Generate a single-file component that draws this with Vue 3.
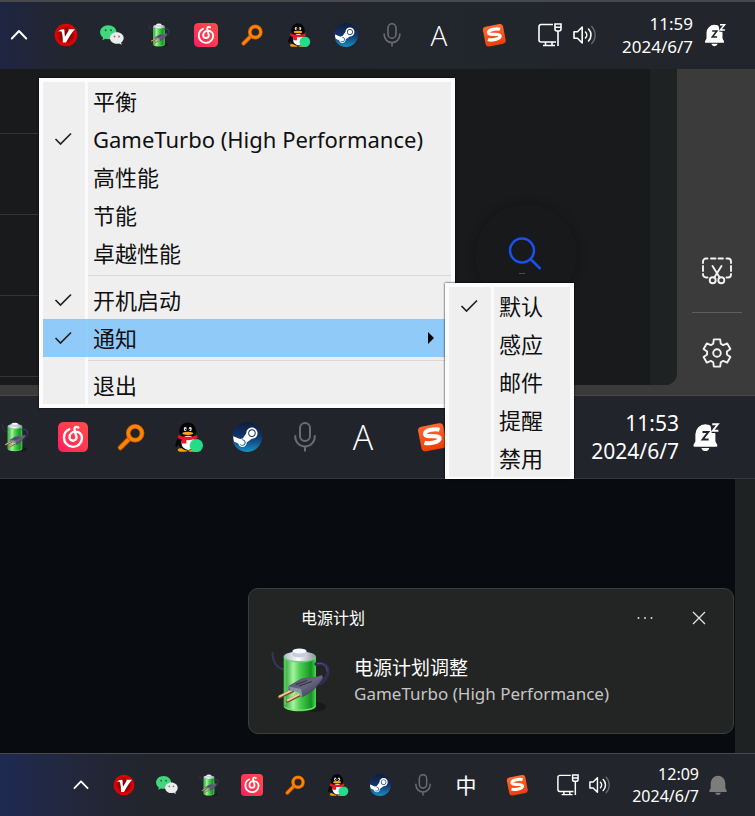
<script setup>
import { ref } from 'vue'

const trayApps = [
  { id: 'hidden', label: '显示隐藏的图标', icon: 'chevron' },
  { id: 'v', label: 'V', icon: 'vred' },
  { id: 'wechat', label: '微信', icon: 'wechat' },
  { id: 'power', label: '电源计划', icon: 'battery' },
  { id: 'music', label: '网易云音乐', icon: 'music' },
  { id: 'search', label: '搜索', icon: 'finder' },
  { id: 'qq', label: 'QQ', icon: 'qq' },
  { id: 'steam', label: 'Steam', icon: 'steam' },
  { id: 'mic', label: '麦克风', icon: 'mic' },
]

const bars = {
  top: { apps: trayApps, ime: 'A', time: '11:59', date: '2024/6/7', bell: 'bellzz', status: true },
  middle: { apps: trayApps.slice(3), ime: 'A', time: '11:53', date: '2024/6/7', bell: 'bellzz', status: false },
  bottom: { apps: trayApps, ime: '中', time: '12:09', date: '2024/6/7', bell: 'bell', status: true },
}

const menuGroups = [
  [
    { text: '平衡' },
    { text: 'GameTurbo (High Performance)', checked: true },
    { text: '高性能' },
    { text: '节能' },
    { text: '卓越性能' },
  ],
  [
    { text: '开机启动', checked: true },
    { text: '通知', checked: true, submenu: true },
  ],
  [{ text: '退出' }],
]

const sounds = ['默认', '感应', '邮件', '提醒', '禁用']
const sound = ref('默认')

function gearPath(c, outer, inner) {
  const points = []
  for (let k = 0; k < 6; k++) {
    const base = k * 60 - 90
    for (const [r, d] of [[inner, -22], [outer, -13], [outer, 13], [inner, 22]]) {
      const a = ((base + d) * Math.PI) / 180
      points.push(`${(c + r * Math.cos(a)).toFixed(2)} ${(c + r * Math.sin(a)).toFixed(2)}`)
    }
  }
  return `M${points.join('L')}Z`
}
const gear = gearPath(15, 14, 10)
</script>

<template>
  <svg class="sprite" aria-hidden="true">
    <defs>
      <radialGradient id="g-red"><stop offset="0" stop-color="#5d0000" /><stop offset=".6" stop-color="#a80000" /><stop offset=".85" stop-color="#e60000" /><stop offset="1" stop-color="#d80808" /></radialGradient>
      <linearGradient id="g-green" x1="0" x2="1" y1="0" y2="0"><stop offset="0" stop-color="#1f9a2b" /><stop offset=".3" stop-color="#a5f3a0" /><stop offset=".5" stop-color="#4fcf52" /><stop offset=".85" stop-color="#129420" /><stop offset="1" stop-color="#4fd456" /></linearGradient>
      <linearGradient id="g-cap" x1="0" x2="1" y1="0" y2="0"><stop offset="0" stop-color="#b8bccb" /><stop offset=".45" stop-color="#ffffff" /><stop offset="1" stop-color="#9396a8" /></linearGradient>
      <linearGradient id="g-plug" x1="0" x2="1" y1="0" y2="1"><stop offset="0" stop-color="#4c4d63" /><stop offset=".5" stop-color="#66677d" /><stop offset="1" stop-color="#25243a" /></linearGradient>
      <linearGradient id="g-music" x1="0" x2="1" y1="1" y2="0"><stop offset="0" stop-color="#ff1b63" /><stop offset=".5" stop-color="#ff3a50" /><stop offset="1" stop-color="#ff4a4c" /></linearGradient>
      <linearGradient id="g-steam" x1="0" x2="0" y1="0" y2="1"><stop offset="0" stop-color="#101c3c" /><stop offset=".5" stop-color="#12356b" /><stop offset="1" stop-color="#1691c8" /></linearGradient>
      <linearGradient id="g-sogou" x1="0" x2="0" y1="0" y2="1"><stop offset="0" stop-color="#ff6a30" /><stop offset="1" stop-color="#ee3e08" /></linearGradient>
    </defs>

    <symbol id="chevron" viewBox="0 0 24 24"><path d="M4.800 15.500 12 8l7.200 7.500" fill="none" stroke="#fff" stroke-width="2" stroke-linecap="round" stroke-linejoin="round" /></symbol>

    <symbol id="vred" viewBox="0 0 24 24">
      <circle cx="12" cy="12" r="11.300" fill="url(#g-red)" />
      <path d="M4 8.500Q6.500 5.800 10.300 6.200L10.900 13.800 15 7 14 6.300H20.800Q17 10.500 12 19.500H8.800Q8.900 12.500 7.400 8.600 6 7.800 4 8.500Z" fill="#fff" />
    </symbol>

    <symbol id="wechat" viewBox="0 0 24 24">
      <path d="M8.300 2.300C3.700 2.300.1 5.400.1 9.300c0 2.200 1.200 4.100 3 5.400l-.8 2.600 3.200-1.500c.9.300 1.800.4 2.800.4 4.600 0 8.200-3.100 8.200-6.900s-3.600-7-8.200-7z" fill="#42d77d" />
      <circle cx="5.600" cy="7.300" r="1" fill="#176b3a" /><circle cx="11" cy="7.300" r="1" fill="#176b3a" />
      <path d="M16.800 9.300c-3.800 0-6.900 2.600-6.900 5.700s3.100 5.800 6.900 5.800c.8 0 1.600-.1 2.300-.3l2.600 1.300-.6-2.200c1.600-1.100 2.600-2.700 2.600-4.600 0-3.100-3.100-5.700-6.900-5.700z" fill="#ececec" />
      <circle cx="14.500" cy="13.500" r=".9" fill="#77797c" /><circle cx="19" cy="13.500" r=".9" fill="#77797c" />
    </symbol>

    <symbol id="battery" viewBox="7 12 66 66">
      <ellipse cx="55" cy="72" rx="11" ry="5" fill="#000" opacity=".3" />
      <path d="M12.500 18C13 27 16 33 24 34.500" fill="none" stroke="#37355d" stroke-width="2.200" stroke-linecap="round" />
      <path d="M23.500 22v49c0 7 32.500 7 32.500 0V22z" fill="url(#g-green)" />
      <path d="M24.500 71c1 5.500 29.500 5.500 30.500 0" fill="none" stroke="#73ea6e" stroke-width="1.200" />
      <path d="M25 24v46" stroke="#7de47b" stroke-width="1" />
      <ellipse cx="39.700" cy="22" rx="16.200" ry="5.600" fill="#77c98a" />
      <ellipse cx="39.700" cy="21.300" rx="15" ry="4.800" fill="url(#g-cap)" />
      <path d="M32.500 16v4c0 3 14 3 14 0v-4z" fill="#c9ccda" />
      <ellipse cx="39.500" cy="16" rx="7" ry="2.500" fill="#f6f8ff" />
      <path d="M56 29c8-2 12.500 2 12 8-.5 6-4 9-8 12" fill="none" stroke="#302e55" stroke-width="3.400" stroke-linecap="round" />
      <path d="M57 28.500c7-1 10.500 3 10 8" fill="none" stroke="#55527e" stroke-width="1" />
      <path d="m19.500 62 13-6" stroke="#7b4a28" stroke-width="3.400" stroke-linecap="round" />
      <path d="m19.500 61.300 12.500-6" stroke="#edc79a" stroke-width="2" stroke-linecap="round" />
      <path d="m27.500 66 13-6.500" stroke="#7b4a28" stroke-width="3.400" stroke-linecap="round" />
      <path d="m27.500 65.300 12.500-6.500" stroke="#f3d0a5" stroke-width="2" stroke-linecap="round" />
      <path d="m28.500 51 12-7c5-2 12-1.500 17.500-2.500l4-1.500 1 3-4 5.500c-3 4-5 7-9 9.500l-8 4.500-2-5.500-11.500-2z" fill="url(#g-plug)" />
      <path d="m29 51.500 12 2.500 1.500 8-3-1.500v-3.500l-9-1.500z" fill="#8f8fab" />
      <path d="m36 49.500 11-4m-8 5.500 13-4.500" stroke="#33334a" stroke-width="1.300" />
    </symbol>

    <symbol id="music" viewBox="0 0 24 24">
      <rect width="24" height="24" rx="4.200" fill="url(#g-music)" />
      <path d="M9 5.800C6.300 7 4.800 9.600 4.800 12.500a7.200 7.200 0 0 0 14.400.3c0-2.900-2.300-5.100-5-5.100-3 0-5 2-5 4.500a2.800 2.800 0 0 0 5.600 0c0-.9-1.600-4.800-1.600-6.600 0-1.700 1.700-2.200 3-1.200" fill="none" stroke="#fff" stroke-width="1.900" stroke-linecap="round" />
    </symbol>

    <symbol id="finder" viewBox="0 0 24 24">
      <path d="M10.500 13.500 3.500 20.500" stroke="#b95500" stroke-width="4.200" stroke-linecap="round" />
      <path d="M11 13 3.500 20.500" stroke="#ff8500" stroke-width="2.800" stroke-linecap="round" />
      <circle cx="15.300" cy="9" r="5.500" fill="none" stroke="#c85d00" stroke-width="3.800" />
      <circle cx="15.300" cy="9" r="5.500" fill="none" stroke="#ff8500" stroke-width="2.500" />
    </symbol>

    <symbol id="qq" viewBox="0 0 24 24">
      <path d="M4.600 11.500C2.500 13.700.8 17 1.300 19.500c.3 1 1.600-.2 2.500-1.500M17.500 11.500c2 2.200 3 4 3.500 7" fill="#050505" />
      <ellipse cx="7" cy="22.300" rx="4" ry="1.500" fill="#f6a313" /><ellipse cx="15" cy="22.300" rx="4" ry="1.500" fill="#f6a313" />
      <ellipse cx="11" cy="15.500" rx="7.700" ry="7.300" fill="#080808" />
      <ellipse cx="11.400" cy="16.500" rx="5.400" ry="5.800" fill="#fff" />
      <path d="M4.200 8.500C4.200 3.500 6.800.3 11 .3s6.800 3.200 6.800 8.200c-1 3-12.600 3-13.600 0z" fill="#050505" />
      <ellipse cx="9" cy="5.600" rx="1.200" ry="1.700" fill="#eee" /><ellipse cx="13" cy="5.600" rx="1.200" ry="1.700" fill="#eee" />
      <circle cx="9.400" cy="5.900" r=".6" /><circle cx="12.600" cy="5.900" r=".6" />
      <ellipse cx="11" cy="9" rx="4.300" ry="1.300" fill="#f9a71a" />
      <path d="M3.500 10.300c4 2 11 2 15 0l.4 2.400c-2.500 1.300-6 1.700-9 1.600v2.900H6.200V14c-1.300-.4-2.300-.8-3.100-1.300z" fill="#ee1526" />
      <circle cx="17.900" cy="18.800" r="5.300" fill="#24dc89" />
    </symbol>

    <symbol id="steam" viewBox="0 0 24 24">
      <circle cx="12" cy="12" r="11" fill="#fff" />
      <path fill="url(#g-steam)" d="M11.979 0C5.678 0 .511 4.860.022 11.037l6.432 2.658c.545-.371 1.203-.59 1.912-.59.063 0 .125.004.188.006l2.861-4.142V8.910c0-2.495 2.028-4.524 4.524-4.524 2.494 0 4.524 2.031 4.524 4.527s-2.030 4.525-4.524 4.525h-.105l-4.076 2.911c0 .052.004.105.004.159 0 1.875-1.515 3.396-3.390 3.396-1.635 0-3.016-1.173-3.331-2.727L.436 15.270C1.862 20.307 6.486 24 11.979 24c6.627 0 11.999-5.373 11.999-12S18.605 0 11.979 0zM7.540 18.210l-1.473-.61c.262.543.714.999 1.314 1.250 1.297.539 2.793-.076 3.332-1.375.263-.63.264-1.319.005-1.949s-.75-1.121-1.377-1.383c-.624-.26-1.290-.249-1.878-.03l1.523.63c.956.4 1.409 1.500 1.009 2.455-.397.957-1.497 1.410-2.454 1.012H7.540zm11.415-9.303c0-1.662-1.353-3.015-3.015-3.015-1.665 0-3.015 1.353-3.015 3.015 0 1.665 1.350 3.015 3.015 3.015 1.663 0 3.015-1.350 3.015-3.015zm-5.273-.005c0-1.252 1.013-2.266 2.265-2.266 1.249 0 2.266 1.014 2.266 2.266 0 1.251-1.017 2.265-2.266 2.265-1.253 0-2.265-1.014-2.265-2.265z" />
    </symbol>

    <symbol id="mic" viewBox="0 0 24 24">
      <path d="M8 4.800a4 4 0 0 1 8 0v6.400a4 4 0 0 1-8 0zM4.200 10.500v1.300a7.800 7.800 0 0 0 15.600 0v-1.300M12 19.800v3.700" fill="none" stroke="#6b6c6e" stroke-width="1.600" />
    </symbol>

    <symbol id="sogou" viewBox="0 0 24 24">
      <g transform="rotate(-11 12 12)">
        <rect x="2" y="2.300" width="20.500" height="20" rx="3.200" fill="url(#g-sogou)" />
        <path d="M19 7.500c-3-1.700-11.500-2.200-12 1.200-.4 3.200 11.200 2.200 10.800 5.400-.4 3.400-9.300 3-12.600 1.200" fill="none" stroke="#fff" stroke-width="3.300" />
      </g>
    </symbol>

    <symbol id="network" viewBox="0 0 24 24">
      <path d="M15 1.500H3a2 2 0 0 0-2 2v13.500a2 2 0 0 0 2 2h15M7.500 19v3.500m6.500-3.500v3.500m-9 0h12M17 1h6v5a2 2 0 0 1-2 2h-2a2 2 0 0 1-2-2zM17 4.300h6M20 8v15" fill="none" stroke="#fff" stroke-width="1.600" />
    </symbol>

    <symbol id="volume" viewBox="0 0 24 24">
      <path d="M1 8.800h3.500L9.200 4v16l-4.700-4.800H1zM12.500 9a4.300 4.300 0 0 1 0 6M15.500 6a8.500 8.500 0 0 1 0 12" fill="none" stroke="#fff" stroke-width="1.600" stroke-linejoin="round" stroke-linecap="round" />
      <path d="M18.700 3.500a12.300 12.300 0 0 1 0 17" fill="none" stroke="#66696d" stroke-width="1.400" stroke-linecap="round" />
    </symbol>

    <symbol id="bell" viewBox="0 0 24 24">
      <path d="M12 2a8 8 0 0 0-8 8v5.500l-1.500 2.700q-.5 1.300.8 1.300h17.400q1.300 0 .8-1.300L20 15.500V10a8 8 0 0 0-8-8zM8.800 20.500a3.300 3.300 0 0 0 6.400 0z" fill="#7c7c7c" />
    </symbol>

    <symbol id="bellzz" viewBox="0 0 24 24">
      <path d="M11.500 1.800a8 8 0 0 0-8 8v5.700L2 18.200q-.5 1.500.8 1.500h17.400q1.300 0 .8-1.500l-1.500-2.700V9.800a8 8 0 0 0-8-8zM8.300 20.700a3.300 3.300 0 0 0 6.400 0z" fill="#fff" />
      <path d="M15.200-1H24v9.800h-7.500z" fill="#22252b" />
      <path d="M9.200 8h4.600l-4.500 6h4.800" fill="none" stroke="#22252b" stroke-width="1.600" />
      <path d="M17 1.800h4.500L17.400 7h4.500" fill="none" stroke="#fff" stroke-width="1.500" />
    </symbol>

    <symbol id="check" viewBox="0 0 18 14"><path d="m1.500 7 5 5L17 1.500" fill="none" stroke="#222" stroke-width="1.700" /></symbol>
  </svg>

  <main class="page">
    <template v-for="(bar, name) in bars" :key="name">
      <footer class="taskbar" :class="name">
        <div class="apps">
          <button v-for="app in bar.apps" :key="app.id" class="tray" type="button" :aria-label="app.label">
            <svg><use :href="'#' + app.icon" /></svg>
          </button>
          <button class="tray ime" :class="{ han: bar.ime === '中' }" type="button">{{ bar.ime }}</button>
        </div>
        <button class="tray sogou" type="button" aria-label="搜狗输入法"><svg><use href="#sogou" /></svg></button>
        <button v-if="bar.status" class="tray network" type="button" aria-label="网络"><svg><use href="#network" /></svg></button>
        <button v-if="bar.status" class="tray volume" type="button" aria-label="音量"><svg><use href="#volume" /></svg></button>
        <button class="clock" type="button"><time>{{ bar.time }}</time><time>{{ bar.date }}</time></button>
        <button class="tray notify" type="button" aria-label="通知中心"><svg><use :href="'#' + bar.bell" /></svg></button>
      </footer>

      <section v-if="name === 'top'" class="desktop">
        <div class="window">
          <div class="lines"><i v-for="n in 4" :key="n"></i></div>
          <button class="lens" type="button" aria-label="搜索">
            <svg viewBox="0 0 34 34"><circle cx="14" cy="13.500" r="12" /><path d="m22.500 22 10 10" /></svg>
            <span></span>
          </button>
          <div class="scroll"></div>
        </div>
        <aside class="side">
          <button type="button" aria-label="截图">
            <svg viewBox="0 0 30 30">
              <path d="M1 7V5.500a3 3 0 0 1 3-3h1.500M9 2.500h4.500M16.500 2.500H21M24.500 2.500H26a3 3 0 0 1 3 3V7M29 10v5M29 18v.5a3 3 0 0 1-3 3h-1.500M5.500 21.500H4a3 3 0 0 1-3-3V18M1 15v-5" />
              <circle cx="10.700" cy="24.300" r="3" /><circle cx="19.300" cy="24.300" r="3" />
              <path d="m12.300 21.500 7.200-11.500M17.700 21.500 10.500 10" />
            </svg>
          </button>
          <hr />
          <button type="button" aria-label="设置">
            <svg viewBox="0 0 30 30"><path :d="gear" /><circle cx="15" cy="15" r="3.800" /></svg>
          </button>
        </aside>

        <div class="menu main-menu" role="menu">
          <div class="sheet">
            <div v-for="(group, g) in menuGroups" :key="g" class="group">
              <button
                v-for="item in group" :key="item.text" type="button" class="item"
                :class="{ active: item.submenu }" role="menuitemcheckbox" :aria-checked="!!item.checked"
              >
                <span class="mark"><svg v-if="item.checked"><use href="#check" /></svg></span>
                <span class="text">{{ item.text }}</span>
                <span v-if="item.submenu" class="arrow"></span>
              </button>
            </div>
          </div>
        </div>
        <div class="menu sub-menu" role="menu">
          <div class="sheet">
            <button
              v-for="s in sounds" :key="s" type="button" class="item"
              role="menuitemradio" :aria-checked="s === sound" @click="sound = s"
            >
              <span class="mark"><svg v-if="s === sound"><use href="#check" /></svg></span>
              <span class="text">{{ s }}</span>
            </button>
          </div>
        </div>
      </section>

      <section v-if="name === 'middle'" class="toast-area">
        <article class="toast">
          <header>
            <h2>电源计划</h2>
            <button type="button" aria-label="更多"><svg viewBox="0 0 16 16"><circle cx="1.500" cy="8" r="1" /><circle cx="8" cy="8" r="1" /><circle cx="14.500" cy="8" r="1" /></svg></button>
            <button type="button" aria-label="关闭"><svg viewBox="0 0 16 16"><path d="m2 2 12 12M14 2 2 14" /></svg></button>
          </header>
          <div class="body">
            <svg class="art"><use href="#battery" /></svg>
            <div>
              <h3>电源计划调整</h3>
              <p>GameTurbo (High Performance)</p>
            </div>
          </div>
        </article>
      </section>
    </template>
  </main>
</template>

<style>
body {
  margin: 0;
  background: #080b10;
}
</style>

<style scoped>
.page {
  font-family: "Noto Sans", "Noto Sans CJK SC", sans-serif;
  color: #fff;
  overflow: hidden;
}
.sprite {
  position: absolute;
  width: 0;
  height: 0;
}
button {
  border: 0;
  padding: 0;
  margin: 0;
  background: none;
  color: inherit;
  font: inherit;
}
svg {
  display: block;
}

/* taskbars */
.taskbar {
  --icon: 24px;
  display: flex;
  align-items: center;
  background: #22252b;
}
.apps {
  flex: 1;
  display: flex;
  justify-content: space-between;
}
.tray {
  flex: none;
  width: var(--icon);
  height: var(--icon);
}
.tray svg {
  width: 100%;
  height: 100%;
}
.ime {
  display: flex;
  align-items: center;
  justify-content: center;
  font-family: "Open Sans", "Noto Sans CJK SC", sans-serif;
  font-weight: 300;
  line-height: 1;
}
.ime.han {
  font-weight: 400;
}
.clock {
  text-align: right;
  white-space: nowrap;
}
.clock time {
  display: block;
}
.top {
  padding: 10px 28px 11px 7px;
  border-top: 2px solid #47494c;
  background: linear-gradient(90deg, #1f2542, #22262f 64px, #22252b);
}
.top .sogou {
  margin-left: 31px;
}
.top .network {
  margin-left: 32px;
}
.top .volume {
  margin-left: 11px;
}
.top .clock {
  width: 96px;
  font-size: 17px;
  line-height: 23px;
}
.top .notify {
  margin-left: 10px;
}
.top .ime {
  font-size: 28px;
}
.middle {
  --icon: 30px;
  padding: 13px 34px 13px 0;
  border-top: 1px solid #47484b;
  border-bottom: 1px solid #36383c;
  background: #21242b;
}
.middle .apps {
  flex: 0 1 378px;
}
.middle .ime {
  font-size: 34px;
}
.middle .sogou {
  margin-left: 39px;
}
.middle .clock {
  margin-left: auto;
  font-size: 21px;
  line-height: 28px;
}
.middle .notify {
  margin-left: 12px;
}
.bottom {
  --icon: 22px;
  padding: 9px 26px 9px 70px;
  border-top: 1px solid #47494c;
  background: linear-gradient(90deg, #1f2a52, #22273a 80px, #22252b 150px);
}
.bottom .sogou {
  margin-left: 29px;
}
.bottom .network {
  margin-left: 29px;
}
.bottom .volume {
  margin-left: 10px;
}
.bottom .clock {
  width: 88px;
  font-size: 16px;
  line-height: 22px;
}
.bottom .notify {
  margin-left: 8px;
}
.bottom .ime {
  font-size: 21px;
}

/* window behind the menus */
.desktop {
  position: relative;
  display: flex;
  background: #3b3b3b;
}
.window {
  flex: 1;
  display: flex;
  height: 316px;
  margin-bottom: 10px;
  background: #191a1b;
  border-radius: 0 0 12px 0;
  overflow: hidden;
}
.lines {
  width: 39px;
  padding-top: 64px;
  display: flex;
  flex-direction: column;
  gap: 80px;
}
.lines i {
  height: 1px;
  background: #333436;
}
.lens {
  align-self: flex-start;
  display: flex;
  flex-direction: column;
  align-items: center;
  gap: 2px;
  width: 102px;
  height: 102px;
  padding: 33px 2px 0 0;
  margin: 135px 73px 0 auto;
  box-sizing: border-box;
  border-radius: 50%;
  background: #18191a;
  box-shadow: 0 0 8px #141516;
}
.lens svg {
  width: 34px;
  height: 34px;
  fill: none;
  stroke: #1a50ee;
  stroke-width: 2.500;
}
.lens span {
  width: 6px;
  height: 1px;
  margin-right: 6px;
  background: #4a4b4c;
}
.scroll {
  width: 27px;
  background: #1f2223;
}
.side {
  box-sizing: border-box;
  width: 78px;
  display: flex;
  flex-direction: column;
  align-items: center;
  padding: 187px 0 0 2px;
}
.side svg {
  width: 30px;
  height: 30px;
  fill: none;
  stroke: #f2f2f2;
  stroke-width: 1.900;
  stroke-linejoin: round;
  stroke-linecap: round;
}
.side hr {
  width: 50px;
  height: 1px;
  margin: 26px 0 25px;
  border: 0;
  background: #5e5e5e;
}

/* popup menus */
.menu {
  position: absolute;
  padding: 4px;
  background: #fcfcfc;
  color: #101010;
  box-shadow: 0 0 2px #000;
}
.main-menu {
  left: 39px;
  top: 9px;
  width: 408px;
}
.sub-menu {
  left: 445px;
  top: 214px;
  width: 121px;
  height: 188px;
}
.sheet {
  background: linear-gradient(90deg, #efefef 42px, #fafafa 42px, #fafafa 45px, #efefef 45px);
}
.group + .group {
  margin-top: 3px;
  padding-top: 6px;
  position: relative;
}
.group + .group::before {
  content: "";
  position: absolute;
  left: 45px;
  right: 0;
  top: 0;
  height: 1px;
  background: #d9d9d9;
}
.item {
  display: flex;
  align-items: center;
  width: 100%;
  height: 38px;
  font-size: 22px;
  line-height: 38px;
  text-align: left;
  white-space: nowrap;
}
.item.active {
  background: rgba(120, 192, 250, 0.8);
}
.mark {
  flex: none;
  width: 39px;
  padding-left: 11px;
  box-sizing: content-box;
}
.mark svg {
  width: 18px;
  height: 14px;
}
.text {
  flex: 1;
}
.arrow {
  margin-right: 17px;
  border: 6px solid transparent;
  border-left-color: #000;
  border-right: 0;
}

/* notification */
.toast-area {
  display: flex;
  justify-content: flex-end;
  padding: 109px 21px 19px;
  background: linear-gradient(270deg, #1f2223 20px, #080b10 20px);
}
.toast {
  box-sizing: border-box;
  width: 486px;
  height: 146px;
  padding: 18px 26px 0 18px;
  border: 1px solid #3c3e3e;
  border-radius: 10px;
  background: #232424;
}
.toast header {
  display: flex;
  align-items: center;
  gap: 38px;
  padding-left: 34px;
}
.toast h2 {
  flex: 1;
  margin: 0;
  font-size: 16px;
  font-weight: 400;
  line-height: 22px;
}
.toast header svg {
  width: 16px;
  height: 16px;
  fill: #d8d8d8;
  stroke: #e4e4e4;
  stroke-width: 1.300;
}
.toast header circle {
  stroke: none;
}
.body {
  display: flex;
  gap: 21px;
  padding-top: 18px;
}
.art {
  flex: none;
  width: 66px;
  height: 66px;
}
.toast h3 {
  margin: 8px 0 0;
  font-size: 19px;
  font-weight: 400;
  line-height: 26px;
}
.toast p {
  margin: 0;
  color: #c6c6c6;
  font-size: 17px;
  line-height: 25px;
}
</style>
